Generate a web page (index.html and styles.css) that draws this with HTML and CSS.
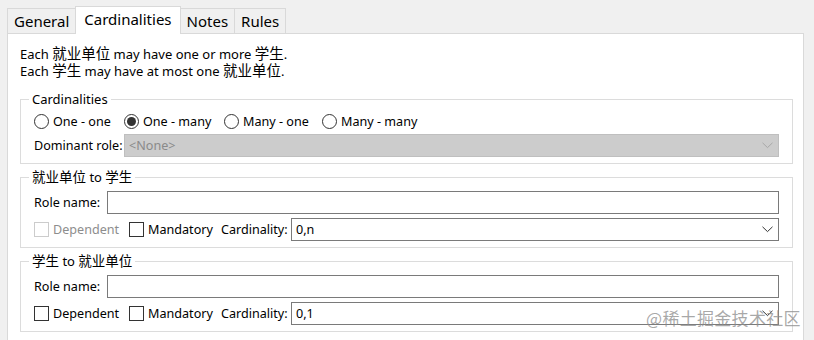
FILE: index.html
```html
<!DOCTYPE html>
<html>
<head>
<meta charset="utf-8">
<link rel="stylesheet" href="styles.css">
</head>
<body>
<div class="tabs">
  <div class="tab">General</div>
  <div class="tab active">Cardinalities</div>
  <div class="tab">Notes</div>
  <div class="tab">Rules</div>
</div>
<div class="panel">
  <p class="desc">Each <span class="zh">就业单位</span> may have one or more <span class="zh">学生</span>.<br>Each <span class="zh">学生</span> may have at most one <span class="zh">就业单位</span>.</p>

  <fieldset class="group g-card">
    <legend>Cardinalities</legend>
    <div class="row radios">
      <label class="radio w1"><span class="rb"></span>One - one</label>
      <label class="radio w2"><span class="rb checked"></span>One - many</label>
      <label class="radio w3"><span class="rb"></span>Many - one</label>
      <label class="radio"><span class="rb"></span>Many - many</label>
    </div>
    <div class="row">
      <span class="lbl lbl-dom">Dominant role:</span>
      <div class="select disabled"><span class="val">&lt;None&gt;</span><svg class="chev" width="11" height="7" viewBox="0 0 11 7"><path d="M0.5 0.8 L5.5 5.6 L10.5 0.8" fill="none" stroke="currentColor" stroke-width="1"/></svg></div>
    </div>
  </fieldset>

  <fieldset class="group g-role">
    <legend><span class="zh-l">就业单位</span> to <span class="zh-l">学生</span></legend>
    <div class="row">
      <span class="lbl lbl-role">Role name:</span>
      <div class="input"></div>
    </div>
    <div class="row">
      <label class="check c1 dis"><span class="cb"></span>Dependent</label>
      <label class="check c2"><span class="cb"></span>Mandatory</label>
      <span class="lbl lbl-card">Cardinality:</span>
      <div class="select"><span class="val">0,n</span><svg class="chev" width="11" height="7" viewBox="0 0 11 7"><path d="M0.5 0.8 L5.5 5.6 L10.5 0.8" fill="none" stroke="currentColor" stroke-width="1"/></svg></div>
    </div>
  </fieldset>

  <fieldset class="group g-role">
    <legend><span class="zh-l">学生</span> to <span class="zh-l">就业单位</span></legend>
    <div class="row">
      <span class="lbl lbl-role">Role name:</span>
      <div class="input"></div>
    </div>
    <div class="row">
      <label class="check c1"><span class="cb"></span>Dependent</label>
      <label class="check c2"><span class="cb"></span>Mandatory</label>
      <span class="lbl lbl-card">Cardinality:</span>
      <div class="select"><span class="val">0,1</span><svg class="chev" width="11" height="7" viewBox="0 0 11 7"><path d="M0.5 0.8 L5.5 5.6 L10.5 0.8" fill="none" stroke="currentColor" stroke-width="1"/></svg></div>
    </div>
  </fieldset>
</div>
<div class="watermark">@稀土掘金技术社区</div>
</body>
</html>
```

FILE: styles.css
```css
html, body {
  margin: 0;
  padding: 0;
}
body {
  width: 814px;
  height: 340px;
  overflow: hidden;
  background: #f0f0f0;
  font-family: "Noto Sans", "Noto Sans CJK SC", sans-serif;
  font-size: 12.6px;
  color: #000;
  position: relative;
}

.tabs {
  display: flex;
  align-items: flex-end;
  padding: 6px 0 0 7px;
  height: 27px;
}
.tab {
  box-sizing: border-box;
  height: 25px;
  border: 1px solid #d9d9d9;
  border-bottom: none;
  background: #f0f0f0;
  font-size: 15px;
  line-height: 24px;
  padding: 0 6px;
  margin-left: -1px;
}
.tab:first-child {
  margin-left: 0;
}
.tab.active {
  height: 28px;
  background: #fff;
  margin-bottom: -1px;
  line-height: 24px;
  padding: 0 8px;
}

.panel {
  box-sizing: border-box;
  margin: 0 10px 0 7px;
  height: 330px;
  border: 1px solid #d9d9d9;
  background: #fff;
  padding: 11px 10px 0 12px;
}

.desc {
  margin: 0;
  line-height: 16px;
  font-size: 13px;
}
.zh {
  font-size: 14.5px;
  line-height: 16px;
}
.zh-l {
  font-size: 13.5px;
}

.group {
  margin: 12px 0 0 0;
  border: 1px solid #dcdcdc;
  padding: 5px 13px 6px 13px;
  min-width: 0;
}
.group + .group {
  margin-top: 5px;
}
.group legend {
  padding: 0 3px;
  margin-left: -5px;
  line-height: 16px;
  font-size: 13px;
}
.g-role {
  padding-top: 6px;
  padding-bottom: 6px;
}

.row {
  display: flex;
  align-items: center;
  height: 23px;
  white-space: nowrap;
}
.row + .row {
  margin-top: 4px;
}
.radios {
  height: 18px;
}
.radio {
  display: flex;
  align-items: center;
  gap: 4px;
  flex: none;
}
.w1 { width: 90px; }
.w2 { width: 100px; }
.w3 { width: 98px; }

.rb {
  box-sizing: border-box;
  width: 15px;
  height: 15px;
  border: 1px solid #333;
  border-radius: 50%;
  display: flex;
  align-items: center;
  justify-content: center;
  flex: none;
}
.rb.checked::after {
  content: "";
  width: 9px;
  height: 9px;
  border-radius: 50%;
  background: #333;
}

.lbl {
  flex: none;
}
.lbl-dom { width: 90px; }
.lbl-role { width: 73px; }
.lbl-card { width: 70px; }

.select, .input {
  box-sizing: border-box;
  flex: 1;
  min-width: 0;
  height: 23px;
  border: 1px solid #7a7a7a;
  background: #fff;
  display: flex;
  align-items: center;
  padding: 0 5px 0 4px;
}
.select .val {
  flex: 1;
}
.select .chev {
  color: #333;
}
.select.disabled {
  background: #cccccc;
  border-color: #bfbfbf;
  color: #8a8a8a;
}
.select.disabled .chev {
  color: #a8a8a8;
}

.check {
  display: flex;
  align-items: center;
  gap: 4px;
  flex: none;
}
.c1 { width: 95px; }
.c2 { width: 92px; }
.cb {
  box-sizing: border-box;
  width: 15px;
  height: 15px;
  border: 1px solid #333;
  background: #fff;
  flex: none;
}
.check.dis {
  color: #8d8d8d;
}
.check.dis .cb {
  border-color: #cccccc;
}

.watermark {
  position: absolute;
  left: 646px;
  top: 306px;
  font-family: "Noto Sans CJK SC", sans-serif;
  font-size: 17px;
  line-height: 24px;
  color: rgba(140, 140, 140, 0.75);
  letter-spacing: 0.3px;
}
```
